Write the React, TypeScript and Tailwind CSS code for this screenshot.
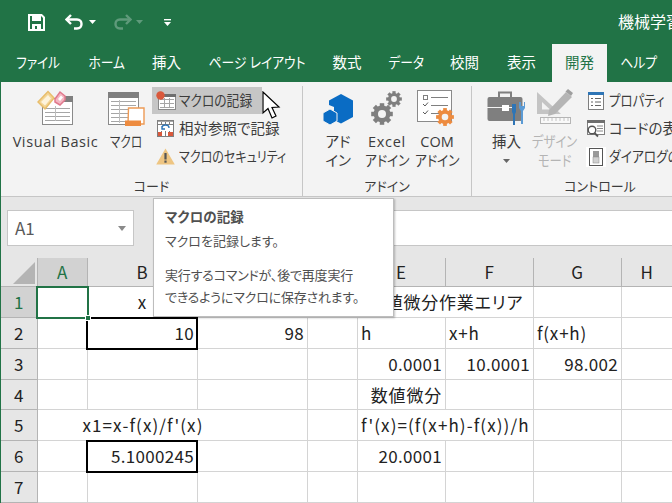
import React from "react";

const Gear = ({ cx, cy, r, color }: { cx: number; cy: number; r: number; color: string }) => (
  <g>
    {[0, 45, 90, 135].map((a) => (
      <rect
        key={a}
        x={cx - r * 0.28}
        y={cy - r * 1.35}
        width={r * 0.56}
        height={r * 2.7}
        fill={color}
        transform={`rotate(${a} ${cx} ${cy})`}
      />
    ))}
    <circle cx={cx} cy={cy} r={r * 1.05} fill={color} />
    <circle cx={cx} cy={cy} r={r * 0.5} fill="#f3f3f3" />
  </g>
);

const SheetLines = ({ x, y, w, n, c = "#a6a6a6" }: { x: number; y: number; w: number; n: number; c?: string }) => (
  <g>
    {Array.from({ length: n }).map((_, i) => (
      <rect key={i} x={x} y={y + i * 4} width={w} height={1} fill={c} />
    ))}
  </g>
);

const VbIcon = () => (
  <svg width="37" height="36" viewBox="0 0 37 36">
    <rect x="5.5" y="8.5" width="30" height="26" fill="#fff" stroke="#8a8a8a" />
    <rect x="26" y="6" width="10" height="6" fill="#7f7f7f" />
    <SheetLines x={8} y={18} w={25} n={4} />
    <rect x="18" y="16" width="1" height="15" fill="#bdbdbd" />
    <path d="M1 12 L11 1.5 L17 8 L8 19 Z" fill="#f3d596" stroke="#e8bd6b" strokeWidth="1.5" />
    <path d="M4 12 L11 5 L14 8.5 L8 15.5 Z" fill="#fdf3dc" />
    <path d="M18 9 L23 2 L28 6 L28 10 L23 15 L18 12 Z" fill="#f4b6c2" stroke="#e0798d" strokeWidth="1.5" />
    <path d="M21 9 L24 5.5 L26 7.5 L23 11 Z" fill="#fff" />
  </svg>
);

const MacroIcon = () => (
  <svg width="37" height="34" viewBox="0 0 37 34">
    <rect x="0.5" y="0.5" width="30" height="32" fill="#fff" stroke="#8a8a8a" />
    <rect x="0" y="0" width="31" height="6" fill="#7f7f7f" />
    <SheetLines x={3} y={9} w={25} n={6} />
    <rect x="11" y="8" width="1" height="23" fill="#bdbdbd" />
    <path d="M20.5 16 H36 V32 H20 Z" fill="#fff" stroke="#ed9a55" strokeWidth="1.4" />
    <rect x="17" y="28.5" width="16" height="5.5" fill="#ed8b3f" />
  </svg>
);

const RecordIcon = () => (
  <svg width="20" height="20" viewBox="0 0 20 20">
    <rect x="2.5" y="4.5" width="17" height="14" fill="#fff" stroke="#8a8a8a" />
    <rect x="2" y="3" width="18" height="3" fill="#6f6f6f" />
    <SheetLines x={4} y={8} w={14} n={3} />
    <rect x="8" y="7" width="1" height="10" fill="#a6a6a6" />
    <rect x="13" y="7" width="1" height="10" fill="#a6a6a6" />
    <circle cx="4.5" cy="4.5" r="4.2" fill="#d9583b" />
  </svg>
);

const RelativeIcon = () => (
  <svg width="19" height="19" viewBox="0 0 19 19">
    <rect x="1.5" y="1.5" width="16" height="16" fill="#fff" stroke="#7f7f7f" />
    {[5, 9, 13].map((x) => (
      <rect key={x} x={x} y={1} width={1} height={16} fill="#7f7f7f" />
    ))}
    <rect x="2" y="5" width="15" height="1" fill="#7f7f7f" />
    <rect x="2" y="2" width="15" height="1" fill="#a6a6a6" />
    <rect x="3" y="6" width="13" height="6" fill="#fff" />
    <path d="M6 9 A3.5 3 0 0 1 13 9 M6 7 V10 H9" fill="none" stroke="#2e75b6" strokeWidth="1.4" />
    <rect x="2" y="13" width="4" height="4" fill="#d9583b" />
    <rect x="12" y="13" width="5" height="4" fill="#d9583b" />
  </svg>
);

const WarnIcon = () => (
  <svg width="19" height="17" viewBox="0 0 19 17">
    <path d="M9.5 0.5 L18.8 16.5 H0.2 Z" fill="#eec582" />
    <rect x="8.4" y="5" width="2.2" height="6.5" fill="#555" />
    <rect x="8.4" y="12.5" width="2.2" height="2.2" fill="#555" />
  </svg>
);

const HexIcon = () => (
  <svg width="32" height="33" viewBox="0 0 32 33">
    <path d="M19 1 L31 7.5 V24 L19 30.5 L12 27 V14 L7 12 V7.5 Z" fill="#0a6cc4" />
    <path d="M8 16 L15 20 V28 L8 32 L1 28 V20 Z" fill="#0a6cc4" stroke="#f3f3f3" strokeWidth="1" />
  </svg>
);

const ExcelGears = () => (
  <svg width="34" height="36" viewBox="0 0 34 36">
    <Gear cx={24} cy={9} r={5.8} color="#7f7f7f" />
    <Gear cx={12} cy={24} r={8} color="#7f7f7f" />
  </svg>
);

const ComIcon = () => (
  <svg width="40" height="36" viewBox="0 0 40 36">
    <rect x="0.5" y="0.5" width="34" height="31" fill="#fff" stroke="#8a8a8a" />
    <rect x="6.5" y="5.5" width="4" height="4" fill="none" stroke="#7f7f7f" />
    <rect x="14" y="7" width="17" height="1" fill="#7f7f7f" />
    <path d="M6 14 L8 16 L11 12.5 M6 22 L8 24 L11 20.5" fill="none" stroke="#5a5a5a" strokeWidth="1" />
    <rect x="14" y="15" width="17" height="1" fill="#7f7f7f" />
    <rect x="14" y="23" width="10" height="1" fill="#7f7f7f" />
    <Gear cx={28} cy={27} r={6.6} color="#ed8b3f" />
  </svg>
);

const CaseIcon = () => (
  <svg width="40" height="36" viewBox="0 0 40 36">
    <path d="M12 7 V2.5 H24 V7" fill="none" stroke="#7f7f7f" strokeWidth="2" />
    <rect x="0.5" y="7" width="35" height="24" rx="2" fill="#7f7f7f" />
    <rect x="0" y="17" width="16" height="1" fill="#f3f3f3" />
    <rect x="22" y="17" width="6" height="1" fill="#f3f3f3" />
    <rect x="15" y="15" width="7" height="6" fill="#fff" />
    <path d="M25 14 V22 L26 24 V35 H28 V24 L29 22 V14 Z" fill="#2e75b6" />
    <path d="M32 12 V18 L34 21 V34 H36 V21 L38 18 V12 L37 12 V16 H34 V12 Z" fill="#5b9bd5" />
  </svg>
);

const DesignIcon = () => (
  <svg width="38" height="38" viewBox="0 0 38 38">
    <path d="M1 4 L25 26 H1 Z M6 14 V21.5 H14 Z" fill="#c4c4c4" fillRule="evenodd" />
    <path d="M13 22 L30 4 L36 9 L19 26 L12 28 Z" fill="#b5b5b5" />
    <path d="M32 1 L37 5 L35 8 L29.5 3.5 Z" fill="#9f9f9f" />
    <rect x="4.5" y="29.5" width="30" height="6" fill="#f9f9f9" stroke="#b5b5b5" />
    <path d="M8 30 V33 M12 30 V33 M16 30 V33 M20 30 V33 M24 30 V33 M28 30 V33 M32 30 V33" stroke="#c4c4c4" />
  </svg>
);

const PropIcon = () => (
  <svg width="16" height="18" viewBox="0 0 16 18">
    <rect x="0.5" y="0.5" width="15" height="17" fill="#fff" stroke="#7f7f7f" />
    <rect x="0" y="0" width="16" height="3" fill="#2e75b6" />
    <path d="M3 6.5H5 M3 10H5 M3 13.5H5 M7 6.5H13 M7 10H13 M7 13.5H13" stroke="#666" />
  </svg>
);

const CodeIcon = () => (
  <svg width="19" height="18" viewBox="0 0 19 18">
    <rect x="1.5" y="1.5" width="17" height="13" fill="#fff" stroke="#7f7f7f" />
    <rect x="1" y="0" width="18" height="3" fill="#6f6f6f" />
    <path d="M11 6H17 M11 8.5H17 M11 11H17" stroke="#888" />
    <circle cx="6" cy="10" r="3.8" fill="#fff" stroke="#555" strokeWidth="1.4" />
    <path d="M8.5 13 L12 16.5" stroke="#555" strokeWidth="1.8" />
  </svg>
);

const DialogIcon = () => (
  <svg width="20" height="20" viewBox="0 0 20 20">
    <rect x="0" y="0" width="20" height="20" fill="#fff" />
    <rect x="3.5" y="1.5" width="13" height="17" fill="#fff" stroke="#555" />
    <rect x="7" y="4" width="6" height="6" fill="#999" />
    <rect x="7" y="10" width="6" height="6" fill="#d0d0d0" stroke="#888" strokeWidth="0.5" />
  </svg>
);

const tabs: { label: string; w: string; sc?: string; on?: boolean }[] = [
  { label: "ファイル", w: "w-[70px]", sc: "scale-x-[0.87]" },
  { label: "ホーム", w: "w-[68px]", sc: "scale-x-[0.88]" },
  { label: "挿入", w: "w-[51px]" },
  { label: "ページ レイアウト", w: "w-[130px]", sc: "scale-x-[0.88]" },
  { label: "数式", w: "w-[50px]" },
  { label: "データ", w: "w-[69px]", sc: "scale-x-[0.88]" },
  { label: "校閲", w: "w-[47px]" },
  { label: "表示", w: "w-[64px] pl-[3px]" },
  { label: "開発", w: "w-[55px]", on: true },
  { label: "ヘルプ", w: "w-[64px]", sc: "scale-x-[0.88]" },
];

const LargeBtn = ({
  icon,
  lines,
  w,
  muted,
}: {
  icon: React.ReactNode;
  lines: { t: string; c?: string }[];
  w: string;
  muted?: boolean;
}) => (
  <div className={`flex flex-col items-center ${w} ${muted ? "text-[#b4b4b4]" : "text-[#3c3c3c]"}`}>
    <div className="h-[40px] mb-[6px] flex items-end justify-center">{icon}</div>
    {lines.map((l) => (
      <div key={l.t} className={`h-[19px] leading-[19px] whitespace-nowrap ${l.c ?? ""}`}>
        {l.t}
      </div>
    ))}
  </div>
);

const SmallBtn = ({ icon, label, on, sc }: { icon: React.ReactNode; label: string; on?: boolean; sc?: string }) => (
  <div className={`flex items-center h-[27px] w-[110px] whitespace-nowrap text-[#3c3c3c] ${on ? "bg-[#c6c6c6]" : ""}`}>
    <div className="w-[27px] flex justify-center shrink-0">{icon}</div>
    <span className={`inline-block origin-left ${sc ?? ""}`}>{label}</span>
  </div>
);

const Group = ({ label, w, children, last }: { label: string; w: string; children: React.ReactNode; last?: boolean }) => (
  <div className={`${w} shrink-0 h-[110px] mt-[4px] flex flex-col ${last ? "" : "border-r border-[#c6c6c6]"}`}>
    <div className="flex h-[86px]">{children}</div>
    <div className="text-center text-[#3c3c3c] text-[13px] leading-[18px] mt-[5px]">{label}</div>
  </div>
);

type C = { t?: string; cls?: string; nr?: boolean; box?: boolean };

const num = "justify-end tracking-[0.3px]";
const formula = "tracking-[1.1px]";

const rows: C[][] = [
  [{}, { t: "x", cls: "justify-center" }, {}, {}, { t: "数値微分作業エリア", cls: "justify-center col-span-2" }, {}, {}],
  [{}, { t: "10", cls: num, box: true }, { t: "98", cls: num }, {}, { t: "h" }, { t: "x+h" }, { t: "f(x+h)" }, {}],
  [{}, {}, {}, {}, { t: "0.0001", cls: num }, { t: "10.0001", cls: num }, { t: "98.002", cls: num }, {}],
  [{}, {}, {}, {}, { t: "数値微分", cls: "justify-end" }, {}, {}, {}],
  [{ nr: true }, { t: "x1=x-f(x)/f'(x)", cls: `justify-center ${formula}`, nr: true }, {}, {}, { t: "f'(x)=(f(x+h)-f(x))/h", cls: `col-span-2 ${formula}` }, {}, {}],
  [{}, { t: "5.1000245", cls: num, box: true }, {}, {}, { t: "20.0001", cls: num }, {}, {}, {}],
  [{}, {}, {}, {}, {}, {}, {}, {}],
];

const heights = ["h-[31px]", "h-[31px]", "h-[31px]", "h-[30px]", "h-[31px]", "h-[31px]", "h-[31px]"];

export default function App() {
  return (
    <div className="relative w-[672px] h-[503px] overflow-hidden bg-white border-l border-[#217346] font-['Open_Sans','Noto_Sans_CJK_JP',sans-serif] [font-feature-settings:'palt'] text-[14.5px]">
      {/* Title bar */}
      <div className="h-[44px] bg-[#217346] flex items-center text-white relative">
        <div className="ml-[27px] w-[18px] flex">
          <svg width="17" height="17" viewBox="0 0 17 17">
            <path d="M1 1 H13.5 L16 3.5 V16 H1 Z" fill="none" stroke="#fff" strokeWidth="2" />
            <rect x="4" y="1" width="9" height="6" fill="#fff" />
            <rect x="4" y="10" width="9" height="6" fill="#fff" />
            <rect x="7" y="12" width="2" height="3" fill="#217346" />
          </svg>
        </div>
        <svg className="ml-[19px]" width="20" height="16" viewBox="0 0 20 16">
          <path d="M6 1 L1.5 5.5 L6 10" fill="none" stroke="#fff" strokeWidth="2.4" />
          <path d="M2 5.5 H12 C18 5.5 18 14.5 12 14.5 H9" fill="none" stroke="#fff" strokeWidth="2.4" />
        </svg>
        <svg className="ml-[4px]" width="7" height="4" viewBox="0 0 7 4"><path d="M0 0H7L3.5 4Z" fill="#fff" /></svg>
        <svg className="ml-[16px]" width="20" height="16" viewBox="0 0 20 16">
          <path d="M14 1 L18.5 5.5 L14 10" fill="none" stroke="#5f9a7b" strokeWidth="2.4" />
          <path d="M18 5.5 H8 C2 5.5 2 14.5 8 14.5 H11" fill="none" stroke="#5f9a7b" strokeWidth="2.4" />
        </svg>
        <svg className="ml-[4px]" width="7" height="4" viewBox="0 0 7 4"><path d="M0 0H7L3.5 4Z" fill="#5f9a7b" /></svg>
        <svg className="ml-[21px]" width="7" height="7" viewBox="0 0 7 7">
          <rect x="0" y="0" width="7" height="1.4" fill="#fff" />
          <path d="M0 3H7L3.5 7Z" fill="#fff" />
        </svg>
        <div className="absolute left-[617px] top-[10px] text-[16px] leading-[24px] whitespace-nowrap">機械学習</div>
      </div>

      {/* Tabs */}
      <div className="h-[38px] bg-[#217346] flex pl-[2px] text-white text-[14.5px]">
        {tabs.map((t) => (
          <div
            key={t.label}
            className={`${t.w} shrink-0 flex items-center justify-center whitespace-pre ${t.on ? "bg-[#f3f3f3] text-[#217346]" : ""}`}
          >
            <span className={`inline-block ${t.sc ?? ""}`}>{t.label}</span>
          </div>
        ))}
      </div>

      {/* Ribbon */}
      <div className="h-[115px] bg-[#f3f3f3] border-b border-[#c6c6c6] flex">
        <Group label="コード" w="w-[302px]">
          <div className="flex pl-[8px]">
            <LargeBtn icon={<VbIcon />} lines={[{ t: "Visual Basic", c: "tracking-[0.6px]" }]} w="w-[93px]" />
            <LargeBtn icon={<MacroIcon />} lines={[{ t: "マクロ", c: "scale-x-[0.8]" }]} w="w-[48px]" />
          </div>
          <div className="flex flex-col ml-[2px] pt-[1px] gap-[1px]">
            <SmallBtn on icon={<RecordIcon />} label="マクロの記録" sc="scale-x-[0.88]" />
            <SmallBtn icon={<RelativeIcon />} label="相対参照で記録" />
            <SmallBtn icon={<WarnIcon />} label="マクロのセキュリティ" sc="scale-x-[0.83]" />
          </div>
        </Group>
        <Group label="アドイン" w="w-[169px]">
          <div className="flex pl-[11px]">
            <LargeBtn icon={<HexIcon />} lines={[{ t: "アド" }, { t: "イン" }]} w="w-[48px]" />
            <LargeBtn
              icon={<ExcelGears />}
              lines={[{ t: "Excel", c: "tracking-[0.7px]" }, { t: "アドイン", c: "scale-x-[0.88]" }]}
              w="w-[50px]"
            />
            <LargeBtn icon={<ComIcon />} lines={[{ t: "COM" }, { t: "アドイン", c: "scale-x-[0.88]" }]} w="w-[50px]" />
          </div>
        </Group>
        <Group label="コントロール" w="w-[256px]" last>
          <div className="w-[200px] flex pl-[11px]">
            <div className="flex flex-col items-center w-[50px] text-[#3c3c3c]">
              <div className="h-[40px] mb-[6px] flex items-end justify-center"><CaseIcon /></div>
              <div className="h-[19px] leading-[19px]">挿入</div>
              <svg className="mt-[8px]" width="7" height="4" viewBox="0 0 7 4"><path d="M0 0H7L3.5 4Z" fill="#666" /></svg>
            </div>
            <LargeBtn
              muted
              icon={<DesignIcon />}
              lines={[{ t: "デザイン", c: "scale-x-[0.85]" }, { t: "モード", c: "scale-x-[0.85]" }]}
              w="w-[50px]"
            />
            <div className="flex flex-col ml-[2px] pt-[1px] gap-[1px] w-[90px]">
              <SmallBtn icon={<PropIcon />} label="プロパティ" sc="scale-x-[0.86]" />
              <SmallBtn icon={<CodeIcon />} label="コードの表示" />
              <SmallBtn icon={<DialogIcon />} label="ダイアログの実行" sc="scale-x-[0.88]" />
            </div>
          </div>
        </Group>
      </div>

      {/* Formula bar */}
      <div className="h-[61px] bg-[#e6e6e6] flex pt-[13px] pl-[6px] font-['Noto_Sans_CJK_JP',sans-serif]">
        <div className="w-[127px] h-[36px] bg-white border border-[#c6c6c6] flex items-center justify-between pl-[7px] pr-[7px] text-[17px] text-[#5a5a5a]">
          A1
          <svg width="8" height="5" viewBox="0 0 8 5"><path d="M0 0H8L4 5Z" fill="#8a8a8a" /></svg>
        </div>
        <div className="flex-1 ml-[20px] h-[36px] bg-white border-y border-[#c6c6c6]" />
      </div>

      {/* Sheet */}
      <div className="bg-white font-['Noto_Sans_CJK_JP',sans-serif] text-[17px] tracking-[0.8px] text-[#222] grid grid-cols-[37px_50px_110px_110px_50px_88px_88px_88px_51px] [font-feature-settings:'normal']">
        <div className="h-[29px] bg-[#e6e6e6] border-r border-b border-[#b4b4b4] flex items-end justify-end pr-[2px] pb-[2px]">
          <svg width="22" height="22" viewBox="0 0 22 22"><path d="M22 0V22H0Z" fill="#b4b4b4" /></svg>
        </div>
        {["A", "B", "C", "D", "E", "F", "G", "H"].map((h, i) => (
          <div
            key={h}
            className={`h-[29px] flex items-center justify-center border-r border-b border-[#b4b4b4] ${i === 0 ? "bg-[#d2d2d2] text-[#217346]" : "bg-[#e6e6e6]"}`}
          >
            {h}
          </div>
        ))}
        {rows.map((row, r) => (
          <React.Fragment key={r}>
            <div
              className={`${heights[r]} flex items-center justify-center border-r border-b border-[#b4b4b4] ${r === 0 ? "bg-[#d2d2d2] text-[#217346]" : "bg-[#e6e6e6]"}`}
            >
              {r + 1}
            </div>
            {row.map((c, i) => (
              <div
                key={i}
                className={`${heights[r]} relative flex items-center px-[3px] whitespace-nowrap border-b border-[#d4d4d4] ${c.nr ? "" : "border-r"} ${c.box ? "z-10 before:absolute before:-left-[2px] before:-top-[1px] before:-right-[1px] before:-bottom-[2px] before:border-2 before:border-black" : ""} ${c.cls ?? ""}`}
              >
                {c.t}
              </div>
            ))}
          </React.Fragment>
        ))}
      </div>

      {/* Selected cell A1 */}
      <div className="absolute left-[35px] top-[286px] w-[53px] h-[33px] border-2 border-[#217346] z-20">
        <div className="absolute -right-[4px] -bottom-[4px] w-[4px] h-[4px] bg-[#217346] border border-white box-content" />
      </div>

      {/* Tooltip */}
      <div className="absolute left-[152px] top-[198px] w-[241px] h-[119px] z-30 bg-white border border-[#bdbdbd] shadow-[1px_1px_2px_rgba(0,0,0,0.25)] px-[11px] pt-[7px] text-[#505050] text-[13px] font-['Noto_Sans_CJK_JP',sans-serif]">
        <div className="font-bold leading-[20px] text-[13.5px]">マクロの記録</div>
        <div className="leading-[20px] mt-[5px]">マクロを記録します。</div>
        <div className="leading-[22px] mt-[13px] whitespace-nowrap [font-feature-settings:'normal'] tracking-[-0.2px]">実行するコマンドが、後で再度実行</div>
        <div className="leading-[22px] whitespace-nowrap tracking-[-0.2px]">できるようにマクロに保存されます。</div>
      </div>

      {/* Mouse pointer */}
      <svg className="absolute left-[261px] top-[91px] z-40" width="19" height="30" viewBox="0 0 19 30">
        <path d="M1 1 V22 L6 17.5 L10 27 L14 25 L10 16.5 L17 16 Z" fill="#fff" stroke="#000" strokeWidth="1.2" />
      </svg>
    </div>
  );
}
